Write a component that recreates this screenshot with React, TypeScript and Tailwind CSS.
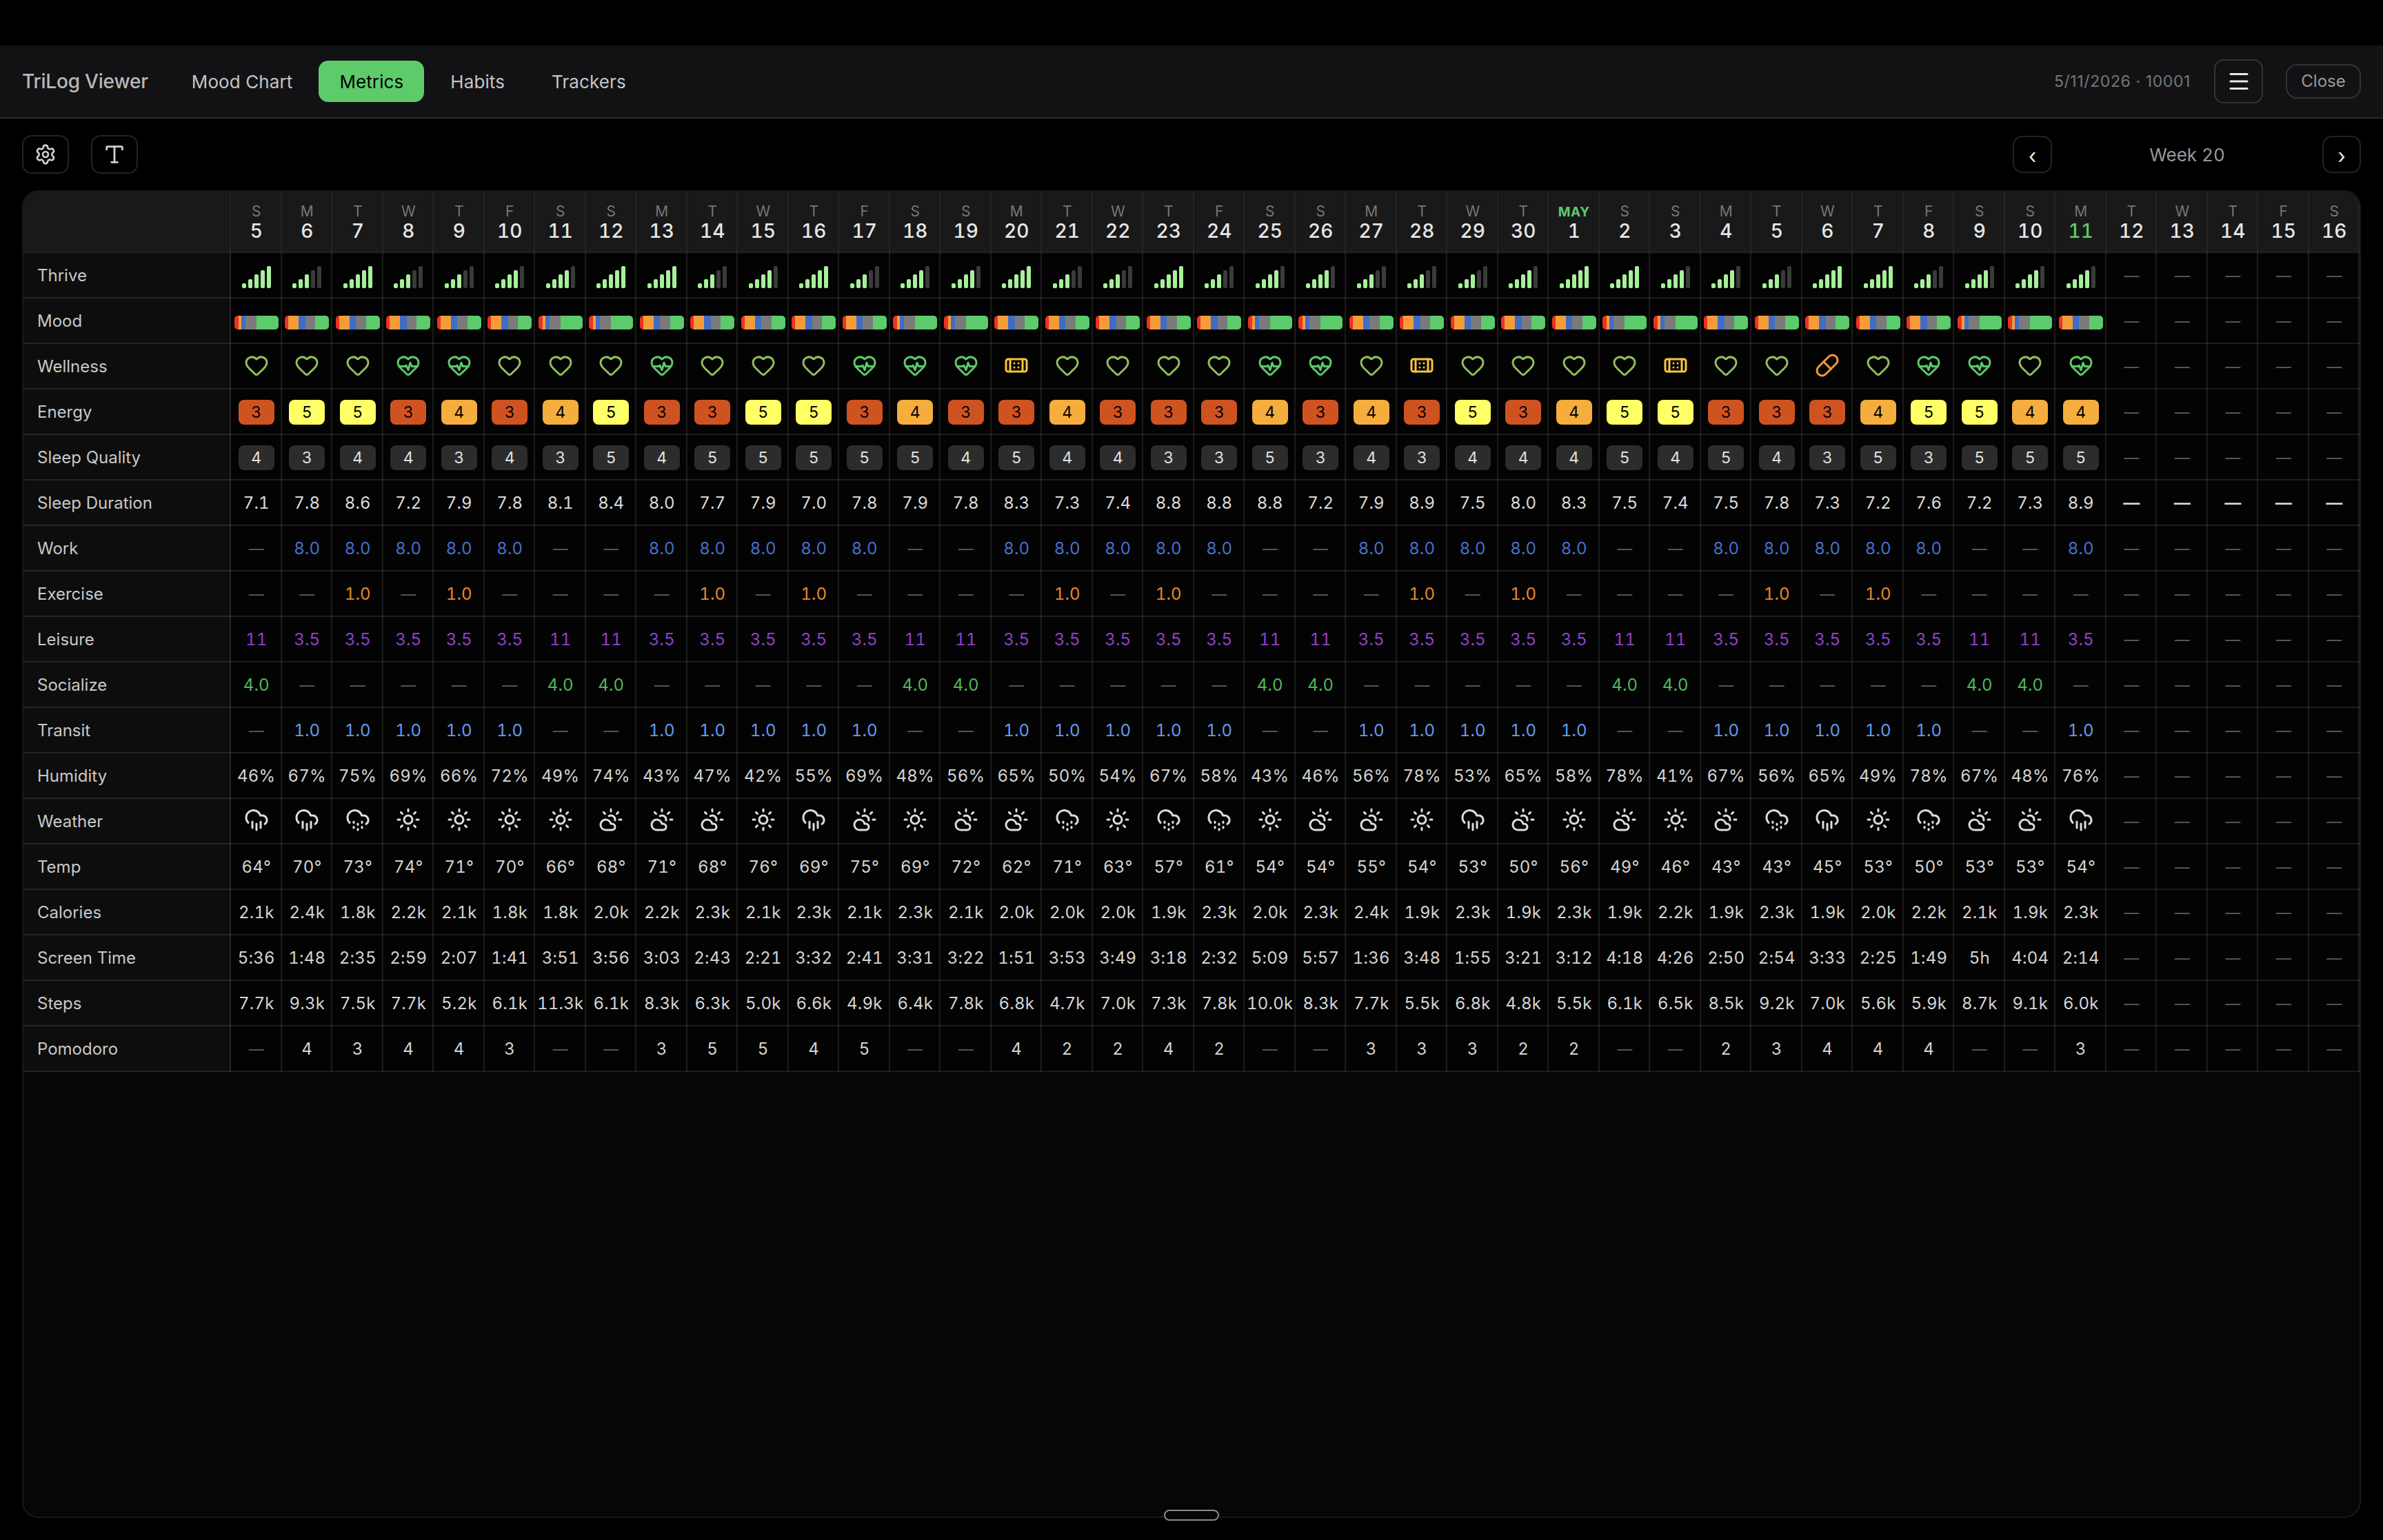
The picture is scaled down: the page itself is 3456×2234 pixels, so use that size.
import React from "react";
import { Bandage, CloudDrizzle, CloudRain, CloudSun, Heart, HeartPulse, Menu, Pill, Settings, Sun, Type } from "lucide-react";

const letters = "SMTWTFSSMTWTFSSMTWTFSSMTWTFSSMTWTFSSMTWTFS".split("");
const dates = [5,6,7,8,9,10,11,12,13,14,15,16,17,18,19,20,21,22,23,24,25,26,27,28,29,30,1,2,3,4,5,6,7,8,9,10,11,12,13,14,15,16];
const LIVE = 37;
const pad = (a: string[]) => [...a, ...Array(42 - a.length).fill("—")];

const thrive = [5,3,5,3,3,4,4,5,5,3,4,5,3,4,4,5,3,3,5,3,4,4,3,3,3,4,5,5,4,4,3,5,5,3,4,4,4];
const wellness = ["h","h","h","p","p","h","h","h","p","h","h","h","p","p","p","b","h","h","h","h","p","p","h","b","h","h","h","h","b","h","h","l","h","p","p","h","p"];
const energy = [3,5,5,3,4,3,4,5,3,3,5,5,3,4,3,3,4,3,3,3,4,3,4,3,5,3,4,5,5,3,3,3,4,5,5,4,4];
const quality = [4,3,4,4,3,4,3,5,4,5,5,5,5,5,4,5,4,4,3,3,5,3,4,3,4,4,4,5,4,5,4,3,5,3,5,5,5];
const sleep = "7.1 7.8 8.6 7.2 7.9 7.8 8.1 8.4 8.0 7.7 7.9 7.0 7.8 7.9 7.8 8.3 7.3 7.4 8.8 8.8 8.8 7.2 7.9 8.9 7.5 8.0 8.3 7.5 7.4 7.5 7.8 7.3 7.2 7.6 7.2 7.3 8.9".split(" ");
const isWeekend = (i: number) => i % 7 === 0 || i % 7 === 6;
const work = Array.from({ length: LIVE }, (_, i) => (isWeekend(i) ? "—" : "8.0"));
const transit = Array.from({ length: LIVE }, (_, i) => (isWeekend(i) ? "—" : "1.0"));
const leisure = Array.from({ length: LIVE }, (_, i) => (isWeekend(i) ? "11" : "3.5"));
const socialize = Array.from({ length: LIVE }, (_, i) => (isWeekend(i) ? "4.0" : "—"));
const exerciseDays = [2, 4, 9, 11, 16, 18, 23, 25, 30, 32];
const exercise = Array.from({ length: LIVE }, (_, i) => (exerciseDays.includes(i) ? "1.0" : "—"));
const humidity = "46 67 75 69 66 72 49 74 43 47 42 55 69 48 56 65 50 54 67 58 43 46 56 78 53 65 58 78 41 67 56 65 49 78 67 48 76".split(" ").map((v) => v + "%");
const weather = "r r d s s s s c c c s r c s c c d s d d s c c s r c s c s c d r s d c c r".split(" ");
const temp = "64 70 73 74 71 70 66 68 71 68 76 69 75 69 72 62 71 63 57 61 54 54 55 54 53 50 56 49 46 43 43 45 53 50 53 53 54".split(" ").map((v) => v + "°");
const calories = "2.1k 2.4k 1.8k 2.2k 2.1k 1.8k 1.8k 2.0k 2.2k 2.3k 2.1k 2.3k 2.1k 2.3k 2.1k 2.0k 2.0k 2.0k 1.9k 2.3k 2.0k 2.3k 2.4k 1.9k 2.3k 1.9k 2.3k 1.9k 2.2k 1.9k 2.3k 1.9k 2.0k 2.2k 2.1k 1.9k 2.3k".split(" ");
const screen = "5:36 1:48 2:35 2:59 2:07 1:41 3:51 3:56 3:03 2:43 2:21 3:32 2:41 3:31 3:22 1:51 3:53 3:49 3:18 2:32 5:09 5:57 1:36 3:48 1:55 3:21 3:12 4:18 4:26 2:50 2:54 3:33 2:25 1:49 5h 4:04 2:14".split(" ");
const steps = "7.7k 9.3k 7.5k 7.7k 5.2k 6.1k 11.3k 6.1k 8.3k 6.3k 5.0k 6.6k 4.9k 6.4k 7.8k 6.8k 4.7k 7.0k 7.3k 7.8k 10.0k 8.3k 7.7k 5.5k 6.8k 4.8k 5.5k 6.1k 6.5k 8.5k 9.2k 7.0k 5.6k 5.9k 8.7k 9.1k 6.0k".split(" ");
const pomodoro = "— 4 3 4 4 3 — — 3 5 5 4 5 — — 4 2 2 4 2 — — 3 3 3 2 2 — — 2 3 4 4 4 — — 3".split(" ");

const A = [8, 23, 15, 23, 31];
const B = [9, 7, 9, 25, 50];

function Cell({ children }: { children?: React.ReactNode }) {
  return (
    <div className="flex h-[66px] min-w-0 items-center justify-center shadow-[inset_-2px_0_0_rgba(255,255,255,0.1),inset_0_-2px_0_rgba(255,255,255,0.1)]">
      {children}
    </div>
  );
}

function Row({ label, children }: { label: string; children: React.ReactNode }) {
  return (
    <div className="grid grid-cols-[301px_repeat(42,minmax(0,1fr))] bg-[#030303]">
      <div className="flex h-[66px] items-center bg-[#0d0d0d] pl-5 text-[24px] text-[#c8c8c8] shadow-[inset_-2px_0_0_rgba(255,255,255,0.1),inset_0_-2px_0_rgba(255,255,255,0.1)]">
        {label}
      </div>
      {children}
    </div>
  );
}

function Dash({ strong }: { strong?: boolean }) {
  return strong ? (
    <span className="text-[24px] font-semibold leading-none text-[#e0e0e0]">—</span>
  ) : (
    <span className="text-[22px] leading-none text-[#5c5c5c]">—</span>
  );
}

function TextRow({ label, values, color, strong }: { label: string; values: string[]; color: string; strong?: boolean }) {
  return (
    <Row label={label}>
      {pad(values).map((v, i) => (
        <Cell key={i}>{v === "—" ? <Dash strong={strong && i >= LIVE} /> : <span className={`whitespace-nowrap text-[24px] leading-none tracking-[0.2px] tabular-nums ${color}`}>{v}</span>}</Cell>
      ))}
    </Row>
  );
}

function Bars({ level }: { level: number }) {
  const heights = ["h-[7px]", "h-[13px]", "h-[20px]", "h-[26px]", "h-[32px]"];
  return (
    <div className="mt-[4px] flex items-end gap-[3px]">
      {heights.map((h, i) => (
        <div key={i} className={`w-[6px] rounded-[2px] ${h} ${i < level ? "bg-[#a6f09a]" : "bg-[#3a3a3a]"}`} />
      ))}
    </div>
  );
}

function MoodBar({ parts }: { parts: number[] }) {
  const colors = ["bg-[#ee3124]", "bg-[#f39c38]", "bg-[#3f6cc4]", "bg-[#7a7a7a]", "bg-[#5bcb6b]"];
  return (
    <div className="mt-[4px] flex h-[20px] w-[64px] overflow-hidden rounded-[5px]">
      {parts.map((p, i) => (
        <div key={i} className={`h-full ${colors[i]}`} style={{ width: `${p}%` }} />
      ))}
    </div>
  );
}

function Badge({ value, className }: { value: number; className: string }) {
  return <div className={`flex h-[36px] w-[52px] items-center justify-center rounded-[8px] text-[23px] leading-none tabular-nums ${className}`}>{value}</div>;
}

const energyColor: Record<number, string> = {
  3: "bg-[#cf5320] text-black",
  4: "bg-[#f5ad3d] text-black",
  5: "bg-[#ffff66] text-black",
};

function WellnessIcon({ kind }: { kind: string }) {
  if (kind === "p") return <HeartPulse size={36} strokeWidth={2} className="mb-[4px] text-[#5cc96a]" />;
  if (kind === "b") return <Bandage size={36} strokeWidth={2} className="mb-[4px] text-[#f7c53c]" />;
  if (kind === "l") return <Pill size={36} strokeWidth={2} className="mb-[4px] text-[#f29a38]" />;
  return <Heart size={36} strokeWidth={2} className="mb-[4px] text-[#8fbf5a]" />;
}

function WeatherIcon({ kind }: { kind: string }) {
  const cls = "mb-[6px] text-[#dcdcdc]";
  if (kind === "r") return <CloudRain size={36} strokeWidth={2} className={cls} />;
  if (kind === "d") return <CloudDrizzle size={36} strokeWidth={2} className={cls} />;
  if (kind === "c") return <CloudSun size={36} strokeWidth={2} className={cls} />;
  return <Sun size={36} strokeWidth={2} className={cls} />;
}

function NavItem({ label, active }: { label: string; active?: boolean }) {
  return (
    <button className={`flex h-[60px] items-center rounded-[14px] px-[30px] text-[26px] tracking-[0.1px] ${active ? "bg-[#5ecb6b] text-black" : "text-[#c4c4c4]"}`}>
      {label}
    </button>
  );
}

export default function App() {
  return (
    <div className="flex h-[2234px] w-[3456px] flex-col bg-black pt-[66px] font-['Inter',sans-serif]">
      <header className="flex h-[106px] shrink-0 items-center border-b-2 border-[#2a2a2c] bg-[#121214] pl-8 pr-8">
        <div className="mr-[33px] text-[28px] font-medium tracking-[-0.2px] text-[#b8b8b8]">TriLog Viewer</div>
        <nav className="flex items-center gap-2">
          <NavItem label="Mood Chart" />
          <NavItem label="Metrics" active />
          <NavItem label="Habits" />
          <NavItem label="Trackers" />
        </nav>
        <div className="ml-auto text-[23px] tracking-[0.6px] text-[#767676]">5/11/2026 · 10001</div>
        <button className="ml-[34px] flex h-[64px] w-[71px] items-center justify-center rounded-[14px] border-2 border-[#333335] text-[#e8e8e8]">
          <Menu size={36} strokeWidth={2} />
        </button>
        <button className="ml-[33px] flex h-[50px] w-[109px] items-center justify-center rounded-[16px] border-2 border-[#333335] text-[24px] text-[#999]">Close</button>
      </header>

      <div className="flex h-[104px] shrink-0 items-center pl-8 pr-8">
        <button className="flex h-[56px] w-[68px] items-center justify-center rounded-[14px] border-2 border-[#222] text-[#cfcfcf]">
          <Settings size={32} strokeWidth={2} />
        </button>
        <button className="ml-8 flex h-[56px] w-[68px] items-center justify-center rounded-[14px] border-2 border-[#222] text-[#cfcfcf]">
          <Type size={34} strokeWidth={2} />
        </button>
        <button className="ml-auto flex h-[54px] w-[57px] items-center justify-center rounded-[14px] border-2 border-[#222] pt-[4px] text-[30px] leading-none text-[#e8e8e8]">‹</button>
        <div className="w-[392px] text-center text-[26px] text-[#999] tabular-nums">Week 20</div>
        <button className="flex h-[54px] w-[56px] items-center justify-center rounded-[14px] border-2 border-[#222] pt-[4px] text-[30px] leading-none text-[#e8e8e8]">›</button>
      </div>

      <main className="relative mx-8 mb-[32px] min-h-0 flex-1 rounded-[24px] border-2 border-[#18181a] bg-[#060606]">
        <div className="overflow-hidden rounded-t-[22px]">
          <div className="grid grid-cols-[301px_repeat(42,minmax(0,1fr))] bg-[#19191a]">
            <div className="h-[89px] shadow-[inset_-2px_0_0_rgba(255,255,255,0.05),inset_0_-2px_0_rgba(255,255,255,0.03)]" />
            {dates.map((d, i) => (
              <div key={i} className="flex h-[89px] flex-col items-center shadow-[inset_-2px_0_0_rgba(255,255,255,0.05),inset_0_-2px_0_rgba(255,255,255,0.03)]">
                {i === 26 ? (
                  <span className="mt-[18px] h-[24px] text-[19px] font-bold leading-[24px] tracking-[0.5px] text-[#5ecb6b]">MAY</span>
                ) : (
                  <span className="mt-[16px] h-[26px] text-[21px] leading-[26px] text-[#777]">{letters[i]}</span>
                )}
                <span className={`-mt-[1px] text-[28px] font-medium leading-[32px] tabular-nums ${i === 36 ? "text-[#5ecb6b]" : "text-[#e6e6e6]"}`}>{d}</span>
              </div>
            ))}
          </div>
        </div>

        <Row label="Thrive">
          {Array.from({ length: 42 }, (_, i) => (
            <Cell key={i}>{i < LIVE ? <Bars level={thrive[i]} /> : <Dash />}</Cell>
          ))}
        </Row>
        <Row label="Mood">
          {Array.from({ length: 42 }, (_, i) => (
            <Cell key={i}>{i < LIVE ? <MoodBar parts={isWeekend(i) ? B : A} /> : <Dash />}</Cell>
          ))}
        </Row>
        <Row label="Wellness">
          {Array.from({ length: 42 }, (_, i) => (
            <Cell key={i}>{i < LIVE ? <WellnessIcon kind={wellness[i]} /> : <Dash />}</Cell>
          ))}
        </Row>
        <Row label="Energy">
          {Array.from({ length: 42 }, (_, i) => (
            <Cell key={i}>{i < LIVE ? <Badge value={energy[i]} className={energyColor[energy[i]]} /> : <Dash />}</Cell>
          ))}
        </Row>
        <Row label="Sleep Quality">
          {Array.from({ length: 42 }, (_, i) => (
            <Cell key={i}>{i < LIVE ? <Badge value={quality[i]} className="bg-[#2c2c2c] text-[#e0e0e0]" /> : <Dash />}</Cell>
          ))}
        </Row>
        <TextRow label="Sleep Duration" values={sleep} color="text-[#dcdcdc]" strong />
        <TextRow label="Work" values={work} color="text-[#4570cc]" />
        <TextRow label="Exercise" values={exercise} color="text-[#e88a2e]" />
        <TextRow label="Leisure" values={leisure} color="text-[#9040c8]" />
        <TextRow label="Socialize" values={socialize} color="text-[#4fb85a]" />
        <TextRow label="Transit" values={transit} color="text-[#639cf0]" />
        <TextRow label="Humidity" values={humidity} color="text-[#d4d4d4]" />
        <Row label="Weather">
          {Array.from({ length: 42 }, (_, i) => (
            <Cell key={i}>{i < LIVE ? <WeatherIcon kind={weather[i]} /> : <Dash />}</Cell>
          ))}
        </Row>
        <TextRow label="Temp" values={temp} color="text-[#d4d4d4]" />
        <TextRow label="Calories" values={calories} color="text-[#d4d4d4]" />
        <TextRow label="Screen Time" values={screen} color="text-[#d4d4d4]" />
        <TextRow label="Steps" values={steps} color="text-[#d4d4d4]" />
        <TextRow label="Pomodoro" values={pomodoro} color="text-[#d4d4d4]" />

        <div className="absolute bottom-[-6px] left-[1654px] h-[16px] w-[80px] rounded-full border-2 border-[#8a8a8a] bg-[#060606]" />
      </main>
    </div>
  );
}
